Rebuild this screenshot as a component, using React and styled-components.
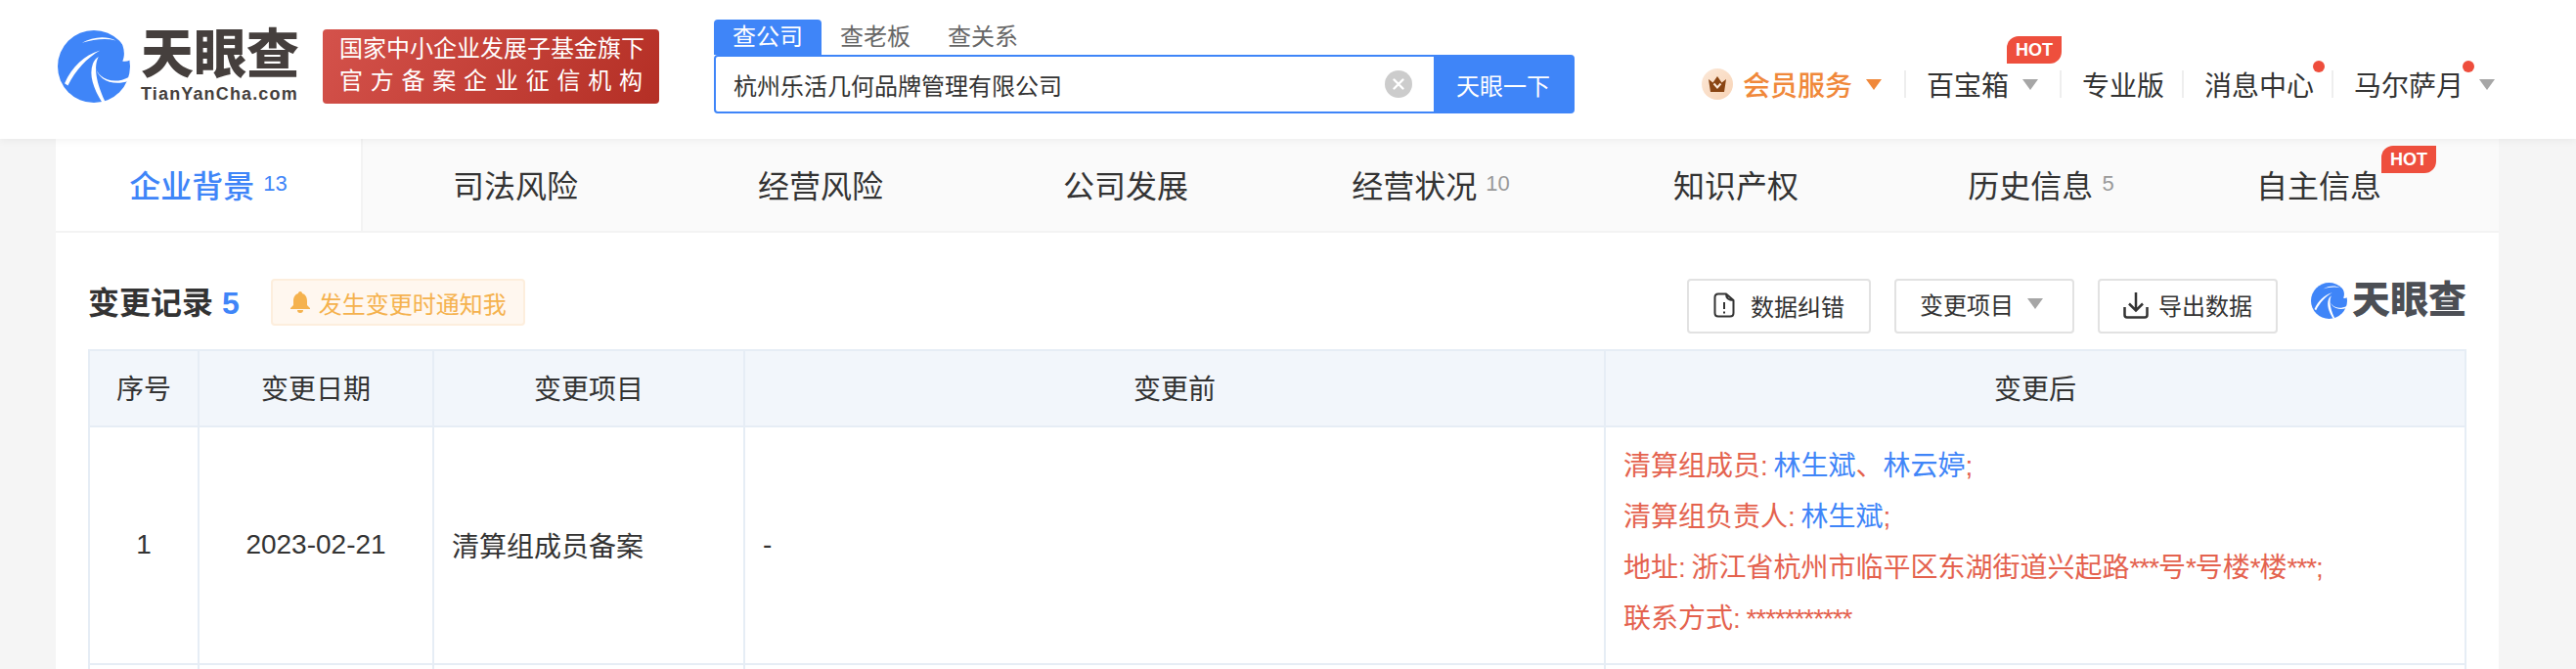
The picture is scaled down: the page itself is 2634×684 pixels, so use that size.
import React from "react";
import styled, { createGlobalStyle } from "styled-components";

const GlobalStyle = createGlobalStyle`
  * { box-sizing: border-box; }
  html, body { margin: 0; padding: 0; background: #f5f5f5; }
  body {
    font-family: "Liberation Sans", "Noto Sans CJK SC", sans-serif;
    color: #333;
  }
`;

const Page = styled.div`
  width: 2634px;
  height: 684px;
  overflow: hidden;
`;

const Header = styled.header`
  position: relative;
  z-index: 2;
  height: 142px;
  background: #fff;
  box-shadow: 0 2px 8px rgba(0, 0, 0, 0.05);
  display: flex;
  padding-left: 59px;
`;

const LogoWrap = styled.div`
  display: flex;
  align-items: center;
  gap: ${({ small }) => (small ? "5px" : "11px")};
  height: ${({ small }) => (small ? "auto" : "142px")};
  padding-bottom: ${({ small }) => (small ? "0" : "6px")};
`;

const LogoText = styled.div`
  display: flex;
  flex-direction: column;
  color: ${({ small }) => (small ? "#4c4f55" : "#453f3d")};
`;

const LogoName = styled.span`
  font-size: ${({ small }) => (small ? "39px" : "54px")};
  line-height: ${({ small }) => (small ? "38px" : "53px")};
  font-weight: 900;
  white-space: nowrap;
`;

const LogoSub = styled.span`
  font-size: 18px;
  line-height: 20px;
  margin-top: 3px;
  font-weight: 700;
  letter-spacing: 1.15px;
  white-space: nowrap;
`;

const RedBadge = styled.div`
  margin: 30px 0 0 24px;
  width: 344px;
  height: 76px;
  border-radius: 4px;
  background: linear-gradient(120deg, #d4524b, #b42f25);
  color: #fff;
  font-size: 24px;
  padding: 3px 17px 0;
`;

const BadgeLine = styled.div`
  height: 33px;
  line-height: 33px;
  white-space: nowrap;
  text-align: justify;
  text-align-last: justify;
`;

const Search = styled.div`
  margin: 20px 0 0 56px;
  width: 880px;
`;

const SearchTabs = styled.div`
  display: flex;
  height: 36px;
`;

const SearchTab = styled.div`
  width: 110px;
  height: 36px;
  line-height: 36px;
  text-align: center;
  font-size: 24px;
  border-radius: 4px 4px 0 0;
  background: ${({ active }) => (active ? "#3f85f8" : "transparent")};
  color: ${({ active }) => (active ? "#fff" : "#666")};
`;

const SearchBox = styled.div`
  display: flex;
  height: 60px;
  border: 2px solid #3f85f8;
  border-radius: 4px;
`;

const SearchInput = styled.div`
  flex: 1;
  display: flex;
  align-items: center;
  justify-content: space-between;
  padding: 0 22px 0 18px;
  font-size: 24px;
  color: #333;
`;

const ClearIcon = styled.span`
  width: 28px;
  height: 28px;
  border-radius: 50%;
  background: #ccc;
  display: flex;
  align-items: center;
  justify-content: center;
`;

const SearchButton = styled.div`
  width: 142px;
  background: #3f85f8;
  color: #fff;
  font-size: 24px;
  display: flex;
  align-items: center;
  justify-content: center;
`;

const Nav = styled.nav`
  position: absolute;
  top: 70px;
  left: 1740px;
  display: flex;
  align-items: center;
  height: 32px;
`;

const NavItem = styled.div`
  position: relative;
  display: flex;
  align-items: center;
  height: 28px;
  font-size: 28px;
  white-space: nowrap;
  color: ${({ vip }) => (vip ? "#f0883a" : "#333")};
  font-weight: ${({ vip }) => (vip ? 500 : 400)};
  padding: ${({ pad }) => pad};
  border-right: ${({ last }) => (last ? "none" : "2px solid #eee")};
`;

const Crown = styled.span`
  width: 32px;
  height: 32px;
  border-radius: 50%;
  background: linear-gradient(135deg, #fbe8d8, #f8d3b5);
  margin-right: 10px;
  display: flex;
  align-items: center;
  justify-content: center;
`;

const Arrow = styled.i`
  width: 0;
  height: 0;
  margin-left: ${({ gap }) => gap || "14px"};
  border-left: 8.5px solid transparent;
  border-right: 8.5px solid transparent;
  border-top: 11px solid ${({ color }) => color || "#a6a6a6"};
`;

const Dot = styled.i`
  position: absolute;
  top: -10px;
  left: ${({ left }) => left};
  width: 12px;
  height: 12px;
  border-radius: 50%;
  background: #ee4d3c;
`;

const HotTag = styled.span`
  display: inline-block;
  width: 56px;
  height: 28px;
  line-height: 28px;
  text-align: center;
  color: #fff;
  background: #ee4f3d;
  font-size: 18px;
  font-weight: 700;
  border-radius: 12px 0 12px 0;
`;

const NavHot = styled(HotTag)`
  position: absolute;
  top: -35px;
  left: 103px;
`;

const Card = styled.main`
  margin-left: 57px;
  width: 2498px;
  background: #fff;
  height: 542px;
`;

const Tabs = styled.div`
  display: flex;
  height: 96px;
  background: #fafafa;
  border-bottom: 2px solid #f3f3f3;
`;

const Tab = styled.div`
  flex: 1;
  height: 94px;
  display: flex;
  align-items: center;
  justify-content: center;
  padding-bottom: 2px;
  font-size: 32px;
  white-space: nowrap;
  color: ${({ active }) => (active ? "#3f85f8" : "#333")};
  background: ${({ active }) => (active ? "#fff" : "transparent")};
  border-right: ${({ active }) => (active ? "2px solid #f3f3f3" : "none")};
  font-weight: ${({ active }) => (active ? 500 : 400)};
`;

const TabCount = styled.span`
  font-size: 22px;
  font-weight: 400;
  margin-left: 9px;
  color: ${({ active }) => (active ? "#3f85f8" : "#999")};
`;

const TabHot = styled(HotTag)`
  position: relative;
  top: -25px;
`;

const Section = styled.section`
  padding: 47px 33px 0;
`;

const SectionHead = styled.div`
  display: flex;
  align-items: flex-start;
  height: 72px;
`;

const Title = styled.h2`
  margin: 1px 0 0;
  font-size: 32px;
  line-height: 48px;
  font-weight: 700;
  color: #333;
  white-space: nowrap;
`;

const TitleCount = styled.span`
  color: #3f85f8;
  margin-left: 9px;
`;

const Notice = styled.div`
  margin-left: 32px;
  width: 260px;
  height: 48px;
  display: flex;
  align-items: center;
  gap: 9px;
  padding-left: 18px;
  font-size: 24px;
  color: #f5b24e;
  background: #fff7ef;
  border: 2px solid #fdeedd;
  border-radius: 4px;
  white-space: nowrap;
`;

const Actions = styled.div`
  margin-left: auto;
  display: flex;
  align-items: flex-start;
  gap: 24px;
`;

const ActionButton = styled.div`
  width: ${({ wide }) => (wide ? "188px" : "184px")};
  height: 56px;
  display: flex;
  align-items: center;
  justify-content: center;
  gap: ${({ gap }) => gap || "12px"};
  padding: ${({ pad }) => pad || "0 0 2px"};
  font-size: 24px;
  color: #333;
  background: #fff;
  border: 2px solid #e2e2e2;
  border-radius: 4px;
  white-space: nowrap;
`;

const LogoSlot = styled.div`
  width: 160px;
  margin-left: 9px;
  padding: 3px 0 0 1px;
`;

const Table = styled.div`
  display: grid;
  grid-template-columns: 112px 240px 318px 880px 880px;
  border-top: 2px solid #e6edf5;
  border-left: 2px solid #e6edf5;
  width: 2432px;
`;

const HeadCell = styled.div`
  height: 78px;
  display: flex;
  align-items: center;
  justify-content: center;
  padding-bottom: 2px;
  background: #f2f6fb;
  font-size: 28px;
  color: #333;
  border-right: 2px solid #e6edf5;
  border-bottom: 2px solid #e6edf5;
`;

const Cell = styled.div`
  height: 243px;
  display: flex;
  align-items: center;
  justify-content: ${({ center }) => (center ? "center" : "flex-start")};
  padding: 0 18px 2px;
  font-size: 28px;
  color: #333;
  border-right: 2px solid #e6edf5;
  border-bottom: 2px solid #e6edf5;
`;

const ChangeList = styled.div`
  color: #e4624e;
  font-size: 28px;
  line-height: 52px;
  word-spacing: -2px;
  white-space: nowrap;
  margin-bottom: 3px;
`;

const PersonName = styled.span`
  color: #3f85f8;
`;

const Masked = styled.span`
  letter-spacing: -1.1px;
`;

function LogoMark({ size }) {
  return (
    <svg width={size} height={size} viewBox="21 24 220 220" style={{ flex: "none" }}>
      <circle cx="131" cy="134" r="110" fill="#3f85f8" />
      <path d="M205 40 C222 70 228 95 218 118 C226 120 236 118 246 112 L246 40 Z" fill="#fff" />
      <path d="M95 62 C125 45 165 38 198 55 C165 47 130 52 95 62Z" fill="#fff" />
      <path d="M42 185 C65 135 100 100 150 85 C110 108 75 145 52 192Z" fill="#fff" />
      <path d="M155 242 C130 200 115 160 128 125 C132 115 138 108 145 104 C134 125 130 165 165 240Z" fill="#fff" />
      <path d="M135 130 C138 165 185 195 240 165 L236 178 C190 195 140 175 135 130Z" fill="#fff" />
    </svg>
  );
}

function Logo({ small }) {
  if (small) {
    return (
      <LogoWrap small>
        <LogoMark size={37} />
        <LogoText small>
          <LogoName small>天眼查</LogoName>
        </LogoText>
      </LogoWrap>
    );
  }
  return (
    <LogoWrap>
      <LogoMark size={74} />
      <LogoText>
        <LogoName>天眼查</LogoName>
        <LogoSub>TianYanCha.com</LogoSub>
      </LogoText>
    </LogoWrap>
  );
}

const mainTabs = [
  { label: "企业背景", count: 13, active: true },
  { label: "司法风险" },
  { label: "经营风险" },
  { label: "公司发展" },
  { label: "经营状况", count: 10 },
  { label: "知识产权" },
  { label: "历史信息", count: 5 },
  { label: "自主信息", hot: true },
];

export default function App() {
  return (
    <Page>
      <GlobalStyle />
      <Header>
        <Logo />
        <RedBadge>
          <BadgeLine>国家中小企业发展子基金旗下</BadgeLine>
          <BadgeLine>官 方 备 案 企 业 征 信 机 构</BadgeLine>
        </RedBadge>
        <Search>
          <SearchTabs>
            <SearchTab active>查公司</SearchTab>
            <SearchTab>查老板</SearchTab>
            <SearchTab>查关系</SearchTab>
          </SearchTabs>
          <SearchBox>
            <SearchInput>
              杭州乐活几何品牌管理有限公司
              <ClearIcon>
                <svg width="14" height="14" viewBox="0 0 14 14">
                  <path d="M2.5 2.5 L11.5 11.5 M11.5 2.5 L2.5 11.5" stroke="#fff" strokeWidth="2.4" strokeLinecap="round" />
                </svg>
              </ClearIcon>
            </SearchInput>
            <SearchButton>天眼一下</SearchButton>
          </SearchBox>
        </Search>
        <Nav>
          <NavItem vip pad="0 23px 0 0">
            <Crown>
              <svg width="20" height="18" viewBox="0 0 20 18">
                <path d="M1 4 L5.5 7.500 L10 1 L14.500 7.500 L19 4 L17 17 L3 17Z" fill="#8a4513" />
                <path d="M6.500 8.500 L10 12.500 L13.500 8.500" fill="none" stroke="#fbe8d8" strokeWidth="2" />
              </svg>
            </Crown>
            会员服务
            <Arrow color="#f0883a" />
          </NavItem>
          <NavItem pad="0 22px 0 21px">
            百宝箱
            <Arrow />
            <NavHot>HOT</NavHot>
          </NavItem>
          <NavItem pad="0 18px 0 21px">专业版</NavItem>
          <NavItem pad="0 18px 0 21px">
            消息中心
            <Dot left="132px" />
          </NavItem>
          <NavItem last pad="0 0 0 21px">
            马尔萨月
            <Arrow gap="16px" />
            <Dot left="132px" />
          </NavItem>
        </Nav>
      </Header>
      <Card>
        <Tabs>
          {mainTabs.map((tab) => (
            <Tab key={tab.label} active={tab.active}>
              {tab.label}
              {tab.count && <TabCount active={tab.active}>{tab.count}</TabCount>}
              {tab.hot && <TabHot>HOT</TabHot>}
            </Tab>
          ))}
        </Tabs>
        <Section>
          <SectionHead>
            <Title>
              变更记录<TitleCount>5</TitleCount>
            </Title>
            <Notice>
              <svg width="20" height="24" viewBox="0 0 20 24">
                <path d="M10 1 C11.5 1 12 2 12 3 C15.500 4 17 7 17 11 L17 15 L20 18 L20 19 L0 19 L0 18 L3 15 L3 11 C3 7 4.500 4 8 3 C8 2 8.500 1 10 1Z M7 20 L13 20 C13 22 12 23 10 23 C8 23 7 22 7 20Z" fill="#f5b24e" />
              </svg>
              发生变更时通知我
            </Notice>
            <Actions>
              <ActionButton wide gap="16px">
                <svg width="22" height="26" viewBox="0 0 22 26" fill="none">
                  <path d="M5 1.500 L13 1.500 C13 6 15 8 20.500 8 L20.500 21 C20.500 23 19 24.500 17 24.500 L5 24.500 C3 24.500 1.500 23 1.500 21 L1.500 5 C1.500 3 3 1.500 5 1.500Z M13 1.500 L20.500 8" stroke="#333" strokeWidth="2" strokeLinejoin="round" />
                  <path d="M11 10 L11 17 M11 19.500 L11 21.500" stroke="#333" strokeWidth="2" />
                </svg>
                数据纠错
              </ActionButton>
              <ActionButton pad="0 6px 6px 0">
                变更项目
                <Arrow gap="2px" />
              </ActionButton>
              <ActionButton gap="10px" pad="0 0 3px">
                <svg width="26" height="28" viewBox="0 0 26 28" fill="none">
                  <path d="M13 1 L13 19 M6 12.500 L13 19.500 L20 12.500" stroke="#333" strokeWidth="2.500" />
                  <path d="M1.500 16 L1.500 24 C1.500 25.500 2.500 26.500 4 26.500 L22 26.500 C23.500 26.500 24.500 25.500 24.500 24 L24.500 16" stroke="#333" strokeWidth="2.500" />
                </svg>
                导出数据
              </ActionButton>
              <LogoSlot>
                <Logo small />
              </LogoSlot>
            </Actions>
          </SectionHead>
          <Table>
            <HeadCell>序号</HeadCell>
            <HeadCell>变更日期</HeadCell>
            <HeadCell>变更项目</HeadCell>
            <HeadCell>变更前</HeadCell>
            <HeadCell>变更后</HeadCell>
            <Cell center>1</Cell>
            <Cell center>2023-02-21</Cell>
            <Cell>清算组成员备案</Cell>
            <Cell>-</Cell>
            <Cell>
              <ChangeList>
                <div>
                  清算组成员: <PersonName>林生斌</PersonName>、<PersonName>林云婷</PersonName>;
                </div>
                <div>
                  清算组负责人: <PersonName>林生斌</PersonName>;
                </div>
                <div>
                  地址: 浙江省杭州市临平区东湖街道兴起路<Masked>***</Masked>号<Masked>*</Masked>号楼<Masked>*</Masked>楼<Masked>***</Masked>;
                </div>
                <div>
                  联系方式: <Masked>***********</Masked>
                </div>
              </ChangeList>
            </Cell>
            <Cell />
            <Cell />
            <Cell />
            <Cell />
            <Cell />
          </Table>
        </Section>
      </Card>
    </Page>
  );
}
